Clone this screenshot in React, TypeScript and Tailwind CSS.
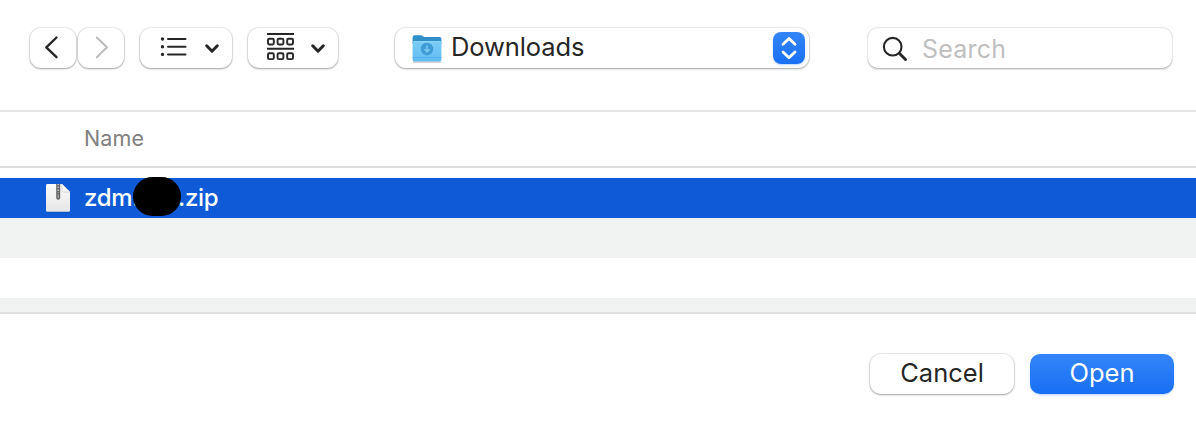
import type { ReactNode } from "react";

const raised =
  "flex h-10 shrink-0 rounded-[11px] bg-white shadow-[0_0_1px_1px_rgba(0,0,0,0.09),0_1px_2px_rgba(0,0,0,0.3)]";

function ToolButton({ className, width, children }: { className: string; width: number; children: ReactNode }) {
  return (
    <button className={`${raised} ${className}`}>
      <svg width={width} height="40" viewBox={`0 0 ${width} 40`} fill="none" stroke="#262626" strokeWidth="2" strokeLinecap="round" strokeLinejoin="round">
        {children}
      </svg>
    </button>
  );
}

function FolderIcon() {
  return (
    <svg className="ml-[17px] mt-1.5 shrink-0" width="30" height="30" viewBox="0 0 30 30">
      <defs>
        <linearGradient id="folder" x1="0" y1="0" x2="0" y2="1">
          <stop offset="0" stopColor="#7accf7" />
          <stop offset="1" stopColor="#62bcf1" />
        </linearGradient>
      </defs>
      <path d="M1 28h28" stroke="#000" strokeOpacity=".22" strokeWidth="1.5" />
      <path d="M.6 3.2Q.6 1.2 2.600 1.2h6.2q1 0 1.8.7l1 .8q.6.4 1.400.4H27.400q2 0 2 2V10H.6Z" fill="#2f8fc9" />
      <path d="M.6 8.400Q.6 7.200 1.800 7.200h26.400q1.200 0 1.200 1.200v17.300q0 1.800-1.800 1.800H2.400Q.6 27.500.6 25.700Z" fill="url(#folder)" />
      <path d="M1.500 7.700h27" stroke="#93d9fb" strokeWidth="1" />
      <path d="M.6 23.500h28.800" stroke="#4da9df" strokeWidth=".8" />
      <circle cx="15" cy="15" r="6.200" fill="#3f9bd4" />
      <path d="M15 11.600v6M12.400 15.200 15 17.800l2.600-2.600" fill="none" stroke="#7accf7" strokeWidth="1.500" />
    </svg>
  );
}

function ZipIcon() {
  return (
    <svg className="ml-[45px] shrink-0" width="26" height="30" viewBox="0 0 26 30">
      <defs>
        <linearGradient id="paper" x1="0" y1="0" x2="0" y2="1">
          <stop offset="0" stopColor="#fafafa" />
          <stop offset="1" stopColor="#e6e6e6" />
        </linearGradient>
      </defs>
      <path d="M2 29h22" stroke="#123f93" strokeOpacity=".7" />
      <path d="M2.400 1H17l8 8v18.400q0 1.400-1.400 1.400H2.400Q1 28.800 1 27.400V2.400Q1 1 2.400 1Z" fill="url(#paper)" />
      <path d="M17 1l8 8h-6.600Q17 9 17 7.600Z" fill="#fff" stroke="#c6c6c6" strokeWidth=".7" />
      <path d="M11.200 1h4v14q0 1.800-2 1.800t-2-1.800Z" fill="#666" />
      <path d="M13.200 1v9" stroke="#bcbcbc" strokeWidth="1.600" strokeDasharray="1.300 1.500" />
      <path d="M13.200 11.500v3.500" stroke="#a5a5a5" strokeWidth="1.200" />
    </svg>
  );
}

export default function App() {
  return (
    <div className="flex h-[428px] w-[1196px] flex-col overflow-hidden bg-white font-['Inter','Liberation_Sans',sans-serif] text-[#262626]">
      <header className="flex h-[110px] shrink-0 items-start pl-[30px] pt-7">
        <ToolButton className="w-[46px]" width={46}>
          <path d="M26.500 9.500 16.300 19.300 26.500 29.200" strokeWidth="2.400" />
        </ToolButton>
        <ToolButton className="ml-0.5 w-[46px]" width={46}>
          <path d="M18.800 9.500 29 19.300 18.800 29.200" stroke="#bcbcbc" strokeWidth="2" />
        </ToolButton>
        <ToolButton className="ml-4 w-[92px]" width={92}>
          <path d="M28 11h17.500M28 18.700h17.500M28 26.400h17.500" />
          <path d="M22.500 11h.01M22.500 18.700h.01M22.500 26.400h.01" strokeWidth="3.400" />
          <path d="M66.700 17.800 72 23.200l5.300-5.400" strokeWidth="3" />
        </ToolButton>
        <ToolButton className="ml-4 w-[90px]" width={90}>
          <path d="M19 6h27M19 20.800h27" strokeLinecap="butt" />
          {[20, 29.6, 39.2].map((x) => (
            <g key={x} strokeWidth="1.900">
              <rect x={x} y="10.700" width="5.800" height="5.800" rx="1.200" />
              <rect x={x} y="25.300" width="5.800" height="5.800" rx="1.200" />
            </g>
          ))}
          <path d="M64.700 17.800 70 23.200l5.300-5.400" strokeWidth="3" />
        </ToolButton>
        <button className={`${raised} ml-[57px] w-[414px]`}>
          <FolderIcon />
          <span className="ml-[9px] mt-px text-[25.5px] leading-9 tracking-[-0.1px]">Downloads</span>
          <span className="ml-auto mr-1 mt-1 flex size-8 rounded-[8px] bg-linear-to-b from-[#3485f7] to-[#1870f4] shadow-[0_1px_2px_rgba(24,112,244,0.3)]">
            <svg width="32" height="32" viewBox="0 0 32 32" fill="none" stroke="white" strokeWidth="2.800" strokeLinecap="round" strokeLinejoin="round">
              <path d="M10 12.300 16 6.500l6 5.800M10 20l6 5.800 6-5.800" />
            </svg>
          </span>
        </button>
        <label className="ml-[59px] flex h-10 w-[304px] shrink-0 rounded-[10px] bg-white shadow-[0_1px_0_#bdbdbd,0_0_0_1px_#e6e6e6,0_1px_1px_1px_#e4e4e4]">
          <svg className="shrink-0" width="46" height="40" viewBox="0 0 46 40" fill="none" stroke="#262626" strokeLinecap="round">
            <circle cx="24.700" cy="18.700" r="8.800" strokeWidth="2.100" />
            <path d="m31.500 25.500 6 6" strokeWidth="2.900" />
          </svg>
          <span className="ml-2 mt-[3px] text-[25px] leading-9 tracking-[0.2px] text-[#bfbfbf]">Search</span>
        </label>
      </header>
      <main className="flex h-[204px] shrink-0 flex-col">
        <div className="flex h-[58px] shrink-0 items-center border-b-2 border-t-2 border-b-[#dcdcdc] border-t-[#e4e4e4] pb-0.5 pl-[84px] text-[21.5px] tracking-[0.1px] text-[#808080]">Name</div>
        <div className="mt-2.5 flex h-10 shrink-0 items-center bg-[#0f5bd7] text-[24px] font-[450] text-white">
          <ZipIcon />
          <span className="relative ml-[13px] flex tracking-[-0.3px]">
            <span className="w-[94px]">zdm.</span>
            <span>.zip</span>
            <span className="absolute left-[49px] top-[-3px] h-[39px] w-12 rounded-[20px] bg-black" />
          </span>
        </div>
        <div className="h-10 shrink-0 bg-[#f1f3f3]" />
        <div className="h-10 shrink-0" />
        <div className="h-4 shrink-0 border-b-2 border-[#e1e1e1] bg-[#f1f3f3]" />
      </main>
      <footer className="flex flex-1 items-start justify-end gap-4 pr-[22px] pt-10 text-[25.5px] leading-[38px]">
        <button className={`${raised} w-36 justify-center`}>Cancel</button>
        <button className="flex h-10 w-36 justify-center rounded-[10px] bg-linear-to-b from-[#3485f7] to-[#176ff4] text-white shadow-[0_1px_2px_rgba(24,112,244,0.3)]">Open</button>
      </footer>
    </div>
  );
}
